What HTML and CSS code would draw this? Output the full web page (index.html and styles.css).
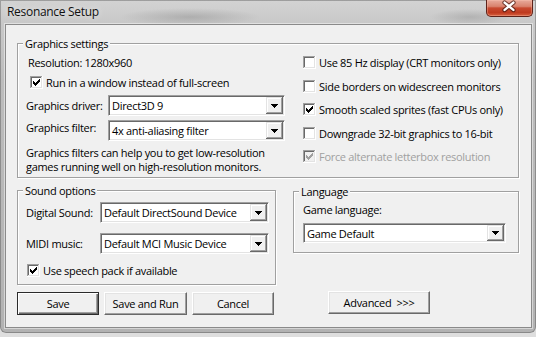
FILE: index.html
```html
<!DOCTYPE html>
<html>
<head>
<meta charset="utf-8">
<title>Resonance Setup</title>
<link rel="stylesheet" href="styles.css">
</head>
<body>
<svg class="defs" width="0" height="0" aria-hidden="true">
  <defs>
    <symbol id="cbox" viewBox="0 0 13 13">
      <path fill="#a0a0a0" d="M0 0h12v1H1v11H0z"/>
      <path fill="#696969" d="M1 1h10v1H2v9H1z"/>
      <path fill="#e3e3e3" d="M11 1h1v11H1v-1h10z"/>
      <path fill="#ffffff" d="M12 0h1v13H0v-1h12z"/>
    </symbol>
    <symbol id="chk" viewBox="0 0 13 13">
      <path d="M9 3h1v1h-1zM8 4h2v1h-2zM3 5h1v1h-1zM7 5h3v1h-3zM3 6h2v1h-2zM6 6h3v1h-3zM3 7h5v1h-5zM4 8h3v1h-3zM5 9h1v1h-1z"/>
    </symbol>
    <symbol id="tri" viewBox="0 0 7 4">
      <path d="M0 0h7v1h-1v1h-1v1h-1v1h-1v-1h-1v-1h-1v-1h-1z"/>
    </symbol>
  </defs>
</svg>

<div class="window">
  <div class="titlebar">
    <span class="title">Resonance Setup</span>
    <div class="close">
      <svg width="47" height="17" viewBox="0 0 47 17">
        <path d="M19 3.5l9 7.5M28 3.5l-9 7.5" stroke="#4a1a12" stroke-opacity="0.75" stroke-width="4.6" stroke-linecap="round" fill="none"/>
        <path d="M19 3.5l9 7.5M28 3.5l-9 7.5" stroke="#ffffff" stroke-width="2.4" stroke-linecap="round" fill="none"/>
      </svg>
    </div>
  </div>

  <div class="client">
    <div class="group graphics">
      <span class="legend">Graphics settings</span>
      <div class="gleft">
        <div class="res">Resolution: 1280x960</div>
        <div class="chkrow indent4">
          <svg class="cb on"><use href="#cbox"/><use href="#chk"/></svg>
          <span>Run in a window instead of full-screen</span>
        </div>
        <div class="row driver">
          <span class="lbl glbl">Graphics driver:</span>
          <div class="combo gcombo"><span class="val">Direct3D 9</span><span class="arrow"><svg class="tri"><use href="#tri"/></svg></span></div>
        </div>
        <div class="row filter">
          <span class="lbl glbl top">Graphics filter:</span>
          <div class="combo gcombo"><span class="val">4x anti-aliasing filter</span><span class="arrow"><svg class="tri"><use href="#tri"/></svg></span></div>
        </div>
        <p class="help">Graphics filters can help you to get low-resolution<br>games running well on high-resolution monitors.</p>
      </div>
      <div class="gright">
        <div class="chkrow">
          <svg class="cb"><use href="#cbox"/></svg>
          <span>Use 85 Hz display (CRT monitors only)</span>
        </div>
        <div class="chkrow">
          <svg class="cb"><use href="#cbox"/></svg>
          <span>Side borders on widescreen monitors</span>
        </div>
        <div class="chkrow">
          <svg class="cb on"><use href="#cbox"/><use href="#chk"/></svg>
          <span>Smooth scaled sprites (fast CPUs only)</span>
        </div>
        <div class="chkrow">
          <svg class="cb"><use href="#cbox"/></svg>
          <span>Downgrade 32-bit graphics to 16-bit</span>
        </div>
        <div class="chkrow disabled">
          <svg class="cb on"><use href="#cbox"/><use href="#chk"/></svg>
          <span>Force alternate letterbox resolution</span>
        </div>
      </div>
    </div>

    <div class="lower">
      <div class="group sound">
        <span class="legend">Sound options</span>
        <div class="row">
          <span class="lbl slbl">Digital Sound:</span>
          <div class="combo scombo"><span class="val">Default DirectSound Device</span><span class="arrow"><svg class="tri"><use href="#tri"/></svg></span></div>
        </div>
        <div class="row midi">
          <span class="lbl slbl">MIDI music:</span>
          <div class="combo scombo"><span class="val">Default MCI Music Device</span><span class="arrow"><svg class="tri"><use href="#tri"/></svg></span></div>
        </div>
        <div class="chkrow speech">
          <svg class="cb on"><use href="#cbox"/><use href="#chk"/></svg>
          <span>Use speech pack if available</span>
        </div>
      </div>

      <div class="group lang">
        <span class="legend">Language</span>
        <div class="langlbl">Game language:</div>
        <div class="combo lcombo"><span class="val">Game Default</span><span class="arrow"><svg class="tri"><use href="#tri"/></svg></span></div>
      </div>
    </div>

    <div class="buttons">
      <button class="btn default">Save</button>
      <button class="btn wide">Save and Run</button>
      <button class="btn">Cancel</button>
      <button class="btn adv">Advanced&nbsp; &gt;&gt;&gt;</button>
    </div>
  </div>
</div>
</body>
</html>
```
FILE: styles.css
```css
html, body {
  margin: 0;
  padding: 0;
  background: #dedede;
}

body {
  font-family: "Open Sans", "Noto Sans", sans-serif;
  font-size: 11px;
  line-height: 15px;
  letter-spacing: -0.3px;
  color: #000;
  width: 536px;
  height: 337px;
  overflow: hidden;
}

.defs {
  position: absolute;
  width: 0;
  height: 0;
}

.window {
  width: 536px;
  height: 333px;
  display: flex;
  flex-direction: column;
  border-radius: 0 0 6px 6px;
  overflow: hidden;
  background:
    radial-gradient(ellipse 70px 9px at 190px 17px, rgba(120,120,120,0.35), rgba(120,120,120,0) 100%),
    radial-gradient(ellipse 40px 8px at 470px 17px, rgba(120,120,120,0.3), rgba(120,120,120,0) 100%),
    linear-gradient(to bottom, #d3d3d3 0, #c8c8c8 24px, #bcbcbc 80px, #b2b2b2 100%);
  box-shadow: inset 0 0 0 1px rgba(60,60,60,0.35);
}

/* title bar */
.titlebar {
  height: 24px;
  flex: none;
  display: flex;
  align-items: flex-start;
}

.title {
  margin: 4px 0 0 7px;
  font-size: 12px;
  line-height: 15px;
  color: #101010;
  text-shadow: 0 0 6px rgba(255,255,255,0.8);
}

.close {
  margin-left: auto;
  margin-right: 3px;
  width: 47px;
  height: 17px;
  box-sizing: border-box;
  border: 1px solid #5e2219;
  border-top: none;
  border-radius: 0 0 5px 5px;
  background: linear-gradient(to bottom, #e8ab9c 0%, #d9826d 40%, #c84a30 50%, #bf3a1f 78%, #d6603f 100%);
  box-shadow: inset 0 0 0 1px rgba(255,200,180,0.35);
  display: flex;
}

.close svg {
  display: block;
  margin: -1px 0 0 -1px;
}

/* client area */
.client {
  margin-left: 5px;
  width: 527px;
  height: 304px;
  box-sizing: border-box;
  border: 1px solid #8a8a8a;
  background: #f0f0f0;
  box-shadow: 0 0 0 1px rgba(255,255,255,0.45);
}

/* group boxes */
.group {
  position: relative;
  box-sizing: border-box;
  border: 1px solid #a0a0a0;
  box-shadow: inset 1px 1px 0 #fff, 1px 1px 0 #fff;
}

.legend {
  position: absolute;
  top: -8px;
  left: 5px;
  padding: 0 2px;
  background: #f0f0f0;
  line-height: 15px;
}

.graphics {
  margin: 18px 0 0 11px;
  width: 502px;
  height: 135px;
  padding: 11px 0 0 8px;
  display: flex;
}

.gleft {
  width: 277px;
  flex: none;
}

.gright {
  display: flex;
  flex-direction: column;
  gap: 8.5px;
}

.res {
  height: 15px;
  margin-left: 2px;
}

.chkrow {
  display: flex;
  align-items: center;
  height: 15px;
  gap: 3px;
  white-space: nowrap;
}

.indent4 {
  margin-top: 5px;
  margin-left: 4px;
}

.cb {
  width: 13px;
  height: 13px;
  flex: none;
  display: block;
  background: #fff;
  fill: #000;
}

.disabled {
  color: #a0a0a0;
}

.disabled .cb {
  background: #f0f0f0;
  fill: #a0a0a0;
}

.row {
  display: flex;
  align-items: center;
  height: 21px;
  white-space: nowrap;
}

.driver { margin-top: 5px; }
.filter { margin-top: 4px; }

.lbl { flex: none; }
.glbl { width: 82px; }
.top { align-self: flex-start; }

.help {
  margin: 5px 0 0 0;
  line-height: 14px;
  white-space: nowrap;
}

/* combo box */
.combo {
  display: flex;
  box-sizing: border-box;
  height: 21px;
  padding: 1px;
  background: #fff;
  border: 1px solid;
  border-color: #a0a0a0 #ffffff #ffffff #a0a0a0;
  box-shadow: inset 1px 1px 0 #696969, inset -1px -1px 0 #e3e3e3;
  flex: none;
}

.combo .val {
  flex: 1;
  padding-left: 2px;
  align-self: center;
  white-space: nowrap;
  overflow: hidden;
}

.combo .arrow {
  width: 17px;
  flex: none;
  box-sizing: border-box;
  background: #f0f0f0;
  box-shadow: inset -1px -1px 0 #696969, inset 1px 1px 0 #e3e3e3, inset -2px -2px 0 #a0a0a0, inset 2px 2px 0 #ffffff;
  display: flex;
  align-items: center;
  justify-content: center;
}

.tri {
  width: 7px;
  height: 4px;
  display: block;
  fill: #000;
  margin-top: 0;
}

.gcombo { width: 177px; }

/* lower groups */
.lower {
  display: flex;
  align-items: flex-start;
  margin-top: 12px;
}

.sound {
  margin-left: 11px;
  width: 259px;
  height: 95px;
  padding: 11px 0 0 8px;
}

.slbl { width: 74px; }
.scombo { width: 169px; }
.midi { margin-top: 10px; }

.speech {
  margin-top: 9px;
  margin-left: 1px;
}

.lang {
  margin: 1px 0 0 17px;
  width: 226px;
  height: 62px;
  padding: 10px 0 0 9px;
}

.langlbl {
  height: 15px;
}

.lcombo {
  margin-top: 6px;
  width: 203px;
  height: 20px;
}

/* buttons */
.buttons {
  display: flex;
  margin: 7px 0 0 11px;
}

.btn {
  font: inherit;
  letter-spacing: inherit;
  color: #000;
  height: 23px;
  width: 82px;
  padding: 0;
  margin: 0 0 0 5px;
  box-sizing: border-box;
  background: #f0f0f0;
  border: 1px solid;
  border-color: #ffffff #696969 #696969 #ffffff;
  box-shadow: inset -1px -1px 0 #a0a0a0, inset 1px 1px 0 #e3e3e3;
  line-height: 19px;
}

.btn.default {
  margin-left: 0;
  border: 1px solid #2b2b2b;
  box-shadow: inset 1px 1px 0 #ffffff, inset -1px -1px 0 #696969, inset -2px -2px 0 #a0a0a0;
}

.btn.wide { width: 83px; }

.btn.adv {
  margin-left: 54px;
  width: 102px;
  margin-top: -1px;
}
```
